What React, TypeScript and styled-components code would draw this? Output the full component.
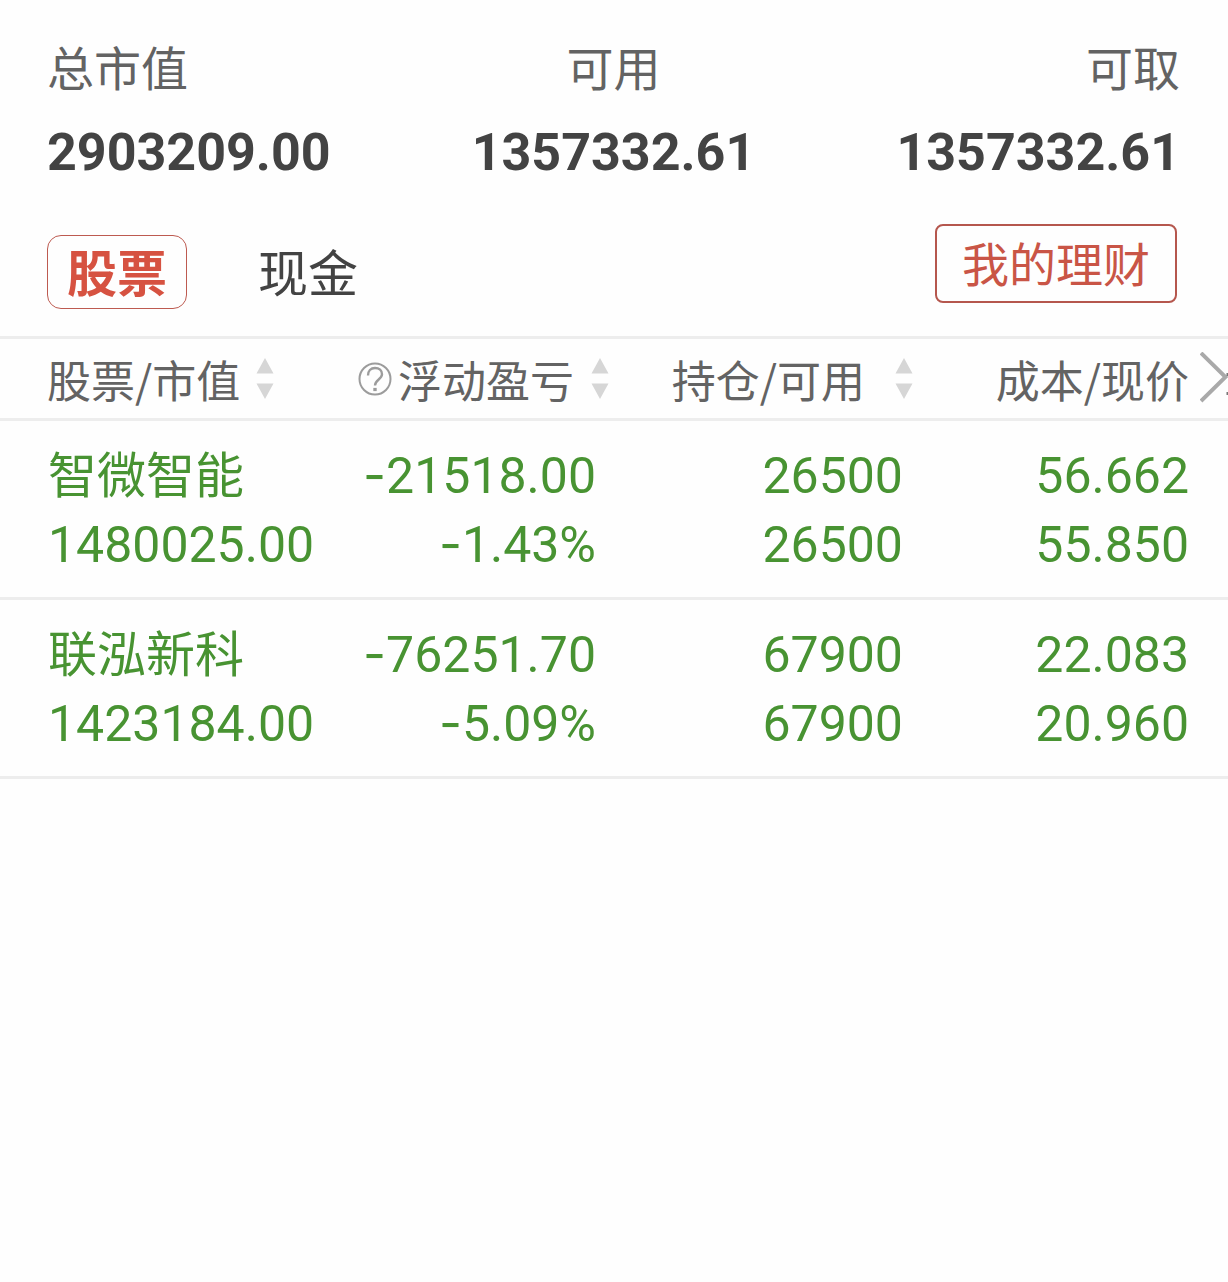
import React from "react";
import styled, { createGlobalStyle } from "styled-components";

const GlobalStyle = createGlobalStyle`
  * { box-sizing: border-box; }
  body { margin: 0; background: #fefefe; overflow-x: hidden; }
  button, table { font: inherit; color: inherit; }
`;

const Page = styled.main`
  font-family: Roboto, "Noto Sans CJK SC", sans-serif;
  color: #636363;
`;

const Summary = styled.dl`
  display: flex;
  justify-content: space-between;
  margin: 0;
  padding: 37px 48px 0 47px;
`;

const SummaryItem = styled.div<{ $align: "left" | "center" | "right" }>`
  text-align: ${(p) => p.$align};
`;

const SummaryLabel = styled.dt`
  font-size: 47px;
  line-height: 66px;
`;

const SummaryValue = styled.dd`
  margin: 15px 0 0;
  font-size: 52px;
  line-height: 70px;
  font-weight: 700;
  color: #434343;
`;

const Toolbar = styled.nav`
  display: flex;
  align-items: flex-start;
  padding: 36px 51px 27px 47px;
`;

const Tab = styled.button<{ $active?: boolean }>`
  margin-top: 11px;
  margin-right: 51px;
  padding: 5px 19px 0;
  height: 74px;
  border: 1px solid ${(p) => (p.$active ? "#bd5a50" : "transparent")};
  border-radius: 14px;
  background: none;
  font-size: 50px;
  line-height: 66px;
  font-weight: ${(p) => (p.$active ? 700 : 400)};
  color: ${(p) => (p.$active ? "#d65241" : "#434343")};
`;

const WealthButton = styled.button`
  margin-left: auto;
  padding: 4px 25px 0;
  height: 79px;
  border: 2px solid #b5574e;
  border-radius: 8px;
  background: none;
  font-size: 47px;
  line-height: 66px;
  color: #c95546;
`;

const TableArea = styled.section`
  position: relative;
`;

const Holdings = styled.table`
  width: 100%;
  table-layout: fixed;
  border-collapse: collapse;
  border-top: 3px solid #ededed;
`;

const Row = styled.tr`
  border-bottom: 3px solid #ededed;
`;

const Col = styled.col<{ $share: number }>`
  width: ${(p) => p.$share}%;
`;

const HeadCell = styled.th<{ $end?: number }>`
  padding: 0 ${(p) => p.$end ?? 0}px 0 ${(p) => (p.$end === undefined ? 47 : 0)}px;
  height: 82px;
  font-size: 44px;
  line-height: 64px;
  font-weight: 400;
`;

const HeadContent = styled.div<{ $gap: number; $end?: boolean }>`
  display: flex;
  align-items: center;
  justify-content: ${(p) => (p.$end ? "flex-end" : "flex-start")};
  gap: ${(p) => p.$gap}px;
  white-space: nowrap;
  font-family: "Noto Sans CJK SC", sans-serif;
`;

const IconButton = styled.button`
  display: flex;
  flex: none;
  padding: 0;
  border: 0;
  background: none;
`;

const HelpLabel = styled.span`
  display: flex;
  align-items: center;
  gap: 6px;
`;

const Cell = styled.td<{ $end?: number }>`
  padding: 21px ${(p) => p.$end ?? 0}px 17px ${(p) => (p.$end === undefined ? 48 : 0)}px;
  text-align: ${(p) => (p.$end === undefined ? "left" : "right")};
  color: #489332;
  font-size: 50px;
  white-space: nowrap;
`;

const Line = styled.div`
  height: 69px;
  line-height: 69px;
`;

const StockName = styled(Line)`
  font-size: 49px;
`;

const Minus = styled.span`
  font-family: Inter, sans-serif;
  line-height: 1;
`;

const ScrollButton = styled(IconButton)`
  position: absolute;
  top: 16px;
  right: 0;
`;

const SortIcon = () => (
  <svg width="18" height="42" viewBox="0 0 18 42" fill="#d6d6d6" aria-hidden="true">
    <path d="M9 0 17.500 15.500H0.500ZM9 41 17.500 25.500H0.500Z" />
  </svg>
);

const HelpIcon = () => (
  <svg width="34" height="34" viewBox="0 0 34 34" fill="none" stroke="#9c9c9c" strokeWidth="2" aria-hidden="true">
    <circle cx="17" cy="17" r="15.5" />
    <path d="M10 13.500c0-4.500 2.800-7.500 7-7.500s7 2.600 7 6.300c0 5-7 5.500-7 11.200" strokeWidth="2.400" />
    <path d="M15.300 27.500h3.400" strokeWidth="3.200" />
  </svg>
);

const ChevronIcon = () => (
  <svg width="28" height="52" viewBox="0 0 28 52" fill="none" aria-hidden="true">
    <path d="M1 1 25.500 25 1 49" stroke="#a9a9a9" strokeWidth="4" />
    <path d="M26.500 22.500h2M26.500 41.500h2" stroke="#777" strokeWidth="3" />
  </svg>
);

const Amount = ({ value }: { value: string }) => (
  <Line>
    {value.startsWith("-") ? (
      <>
        <Minus>-</Minus>
        {value.slice(1)}
      </>
    ) : (
      value
    )}
  </Line>
);

const holdings = [
  { name: "智微智能", value: "1480025.00", profit: "-21518.00", rate: "-1.43%", held: "26500", free: "26500", cost: "56.662", price: "55.850" },
  { name: "联泓新科", value: "1423184.00", profit: "-76251.70", rate: "-5.09%", held: "67900", free: "67900", cost: "22.083", price: "20.960" },
];

export default function App() {
  return (
    <Page>
      <GlobalStyle />
      <Summary>
        <SummaryItem $align="left">
          <SummaryLabel>总市值</SummaryLabel>
          <SummaryValue>2903209.00</SummaryValue>
        </SummaryItem>
        <SummaryItem $align="center">
          <SummaryLabel>可用</SummaryLabel>
          <SummaryValue>1357332.61</SummaryValue>
        </SummaryItem>
        <SummaryItem $align="right">
          <SummaryLabel>可取</SummaryLabel>
          <SummaryValue>1357332.61</SummaryValue>
        </SummaryItem>
      </Summary>
      <Toolbar>
        <Tab type="button" $active>股票</Tab>
        <Tab type="button">现金</Tab>
        <WealthButton type="button">我的理财</WealthButton>
      </Toolbar>
      <TableArea>
        <Holdings>
          <colgroup>
            <Col $share={27} />
            <Col $share={23} />
            <Col $share={25} />
            <Col $share={25} />
          </colgroup>
          <thead>
            <Row>
              <HeadCell scope="col">
                <HeadContent $gap={16}>
                  股票/市值
                  <IconButton type="button" aria-label="按市值排序"><SortIcon /></IconButton>
                </HeadContent>
              </HeadCell>
              <HeadCell scope="col" $end={5}>
                <HeadContent $gap={17} $end>
                  <HelpLabel>
                    <IconButton type="button" aria-label="浮动盈亏说明"><HelpIcon /></IconButton>
                    浮动盈亏
                  </HelpLabel>
                  <IconButton type="button" aria-label="按浮动盈亏排序"><SortIcon /></IconButton>
                </HeadContent>
              </HeadCell>
              <HeadCell scope="col" $end={8}>
                <HeadContent $gap={30} $end>
                  持仓/可用
                  <IconButton type="button" aria-label="按持仓排序"><SortIcon /></IconButton>
                </HeadContent>
              </HeadCell>
              <HeadCell scope="col" $end={39}>
                <HeadContent $gap={0} $end>成本/现价</HeadContent>
              </HeadCell>
            </Row>
          </thead>
          <tbody>
            {holdings.map((h) => (
              <Row key={h.name}>
                <Cell>
                  <StockName>{h.name}</StockName>
                  <Amount value={h.value} />
                </Cell>
                <Cell $end={18}>
                  <Amount value={h.profit} />
                  <Amount value={h.rate} />
                </Cell>
                <Cell $end={18}>
                  <Amount value={h.held} />
                  <Amount value={h.free} />
                </Cell>
                <Cell $end={39}>
                  <Amount value={h.cost} />
                  <Amount value={h.price} />
                </Cell>
              </Row>
            ))}
          </tbody>
        </Holdings>
        <ScrollButton type="button" aria-label="更多列"><ChevronIcon /></ScrollButton>
      </TableArea>
    </Page>
  );
}
